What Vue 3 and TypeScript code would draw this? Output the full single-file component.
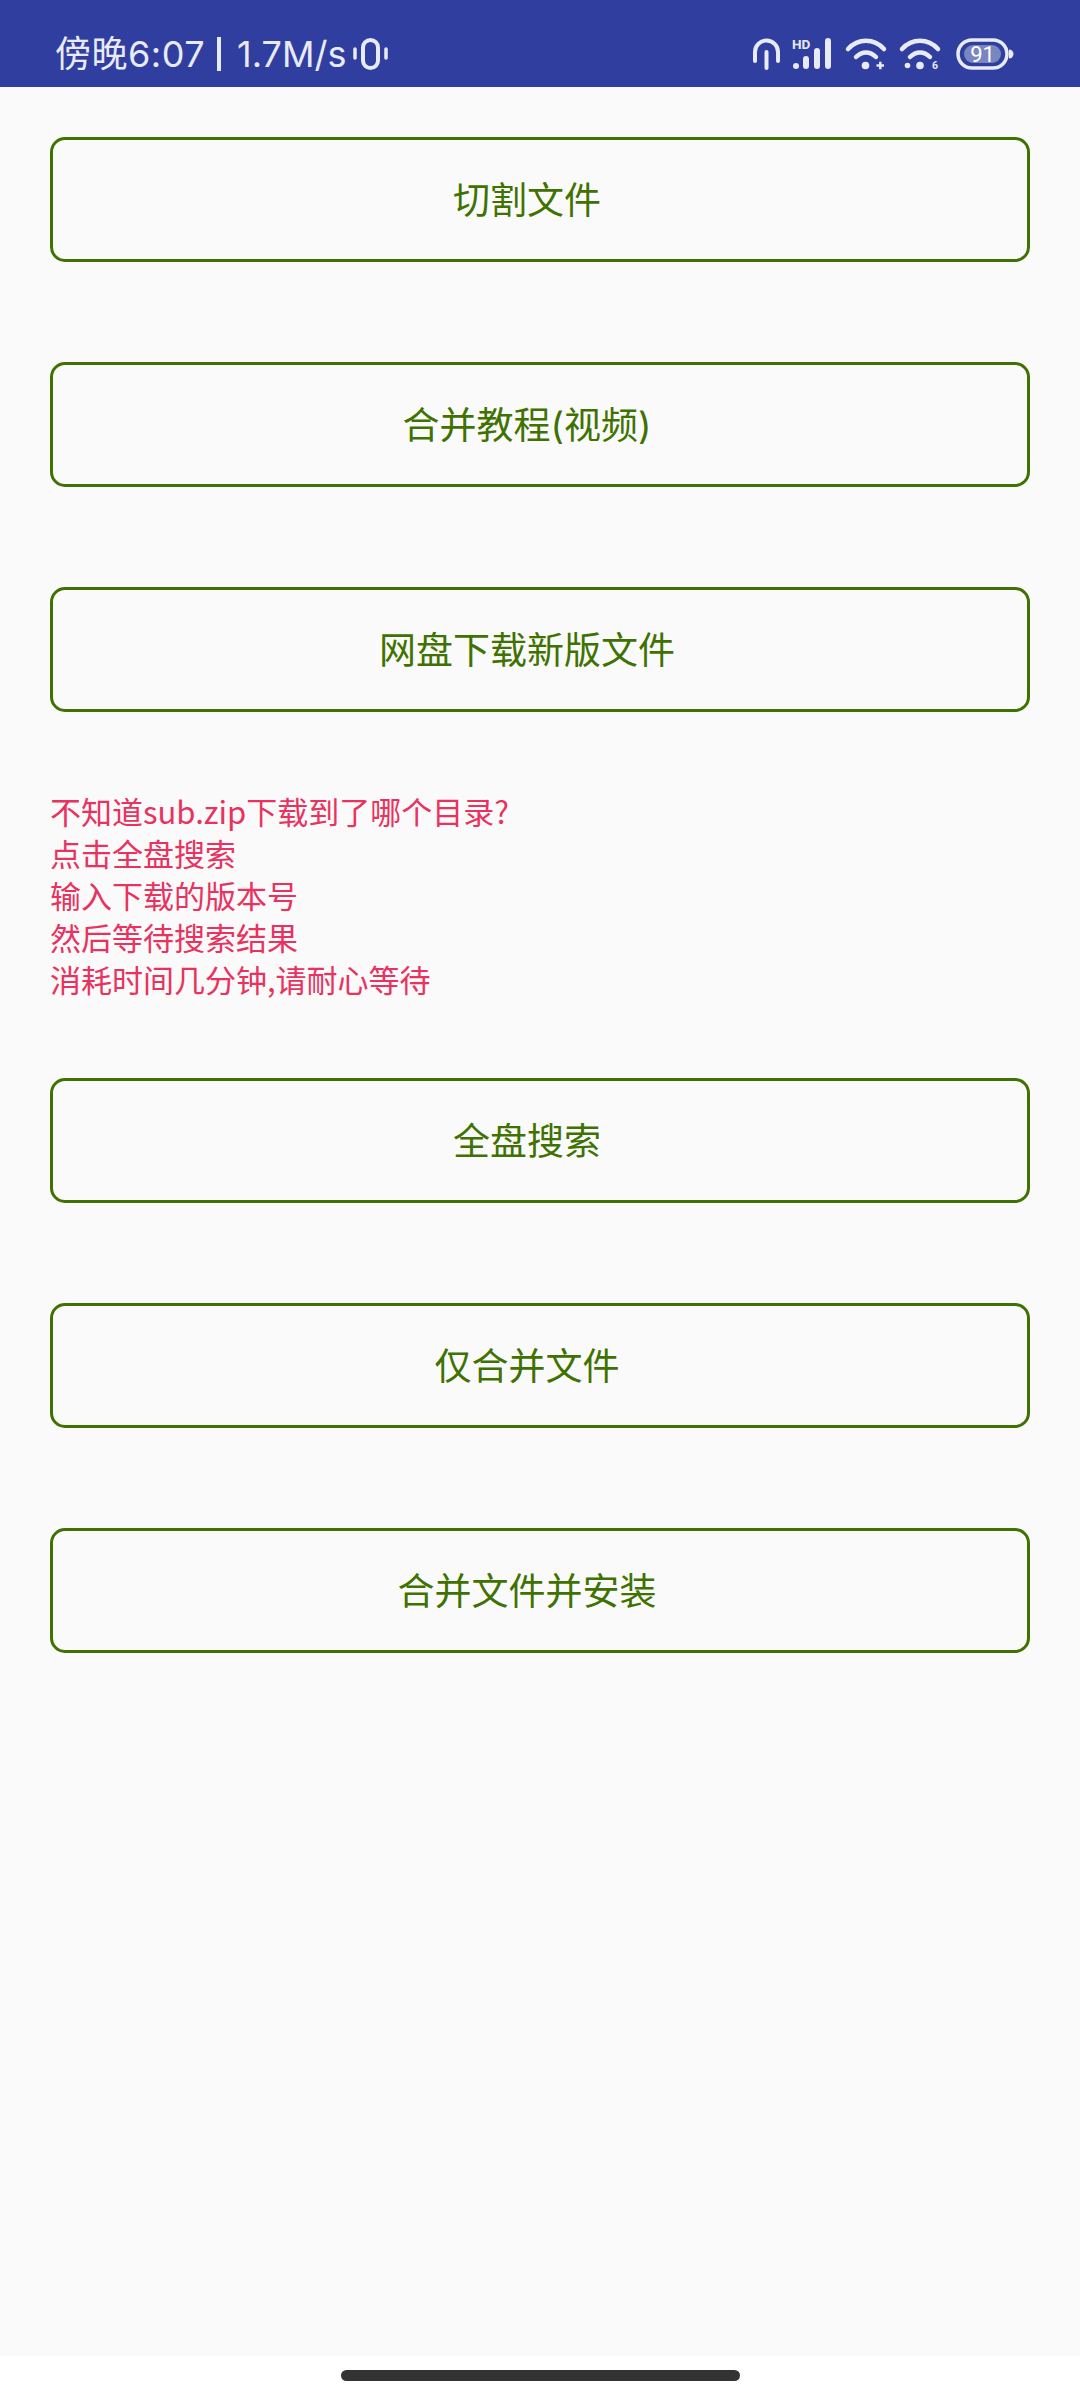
<script setup lang="ts">
const topButtons = ['切割文件', '合并教程(视频)', '网盘下载新版文件']
const bottomButtons = ['全盘搜索', '仅合并文件', '合并文件并安装']
const hints = [
  '不知道sub.zip下载到了哪个目录?',
  '点击全盘搜索',
  '输入下载的版本号',
  '然后等待搜索结果',
  '消耗时间几分钟,请耐心等待',
]
</script>

<template>
  <div class="screen">
    <header class="status-bar">
      <div class="status-left">
        <span class="clock">傍晚6:07</span>
        <span class="sep"></span>
        <span class="speed">1.7M/s</span>
        <svg class="ic-vibrate" width="35" height="32" viewBox="0 0 35 32" fill="none" stroke="#e8eaf6">
          <rect x="10" y="2" width="15" height="28" rx="7.500" stroke-width="4" />
          <path d="M2 11v9M33 11v9" stroke-width="3.500" stroke-linecap="round" />
        </svg>
      </div>
      <div class="status-right">
        <svg class="ic-antenna" width="27" height="32" viewBox="0 0 27 32" fill="none" stroke="#e8eaf6" stroke-width="4" stroke-linecap="round">
          <path d="M2 23V14a11.500 11.500 0 0 1 23 0v9" />
          <path d="M13.500 14v16" />
        </svg>
        <svg class="ic-signal" width="40" height="32" viewBox="0 0 40 32" fill="#e8eaf6">
          <text x="0" y="11" class="hd">HD</text>
          <circle cx="4" cy="28" r="3" />
          <rect x="11" y="18" width="6" height="13" rx="3" />
          <rect x="22" y="10" width="6" height="21" rx="3" />
          <rect x="33" y="0" width="6" height="31" rx="3" />
        </svg>
        <svg class="ic-wifi" width="40" height="32" viewBox="0 0 40 32" fill="#e8eaf6">
          <path d="M2 11C12 0 28 0 38 11" fill="none" stroke="#e8eaf6" stroke-width="4.500" stroke-linecap="round" />
          <path d="M10 19c6-6 14-6 20 0" fill="none" stroke="#e8eaf6" stroke-width="4.500" stroke-linecap="round" />
          <circle cx="19.500" cy="27.500" r="3.800" />
          <path d="M30.500 27.500h7.500M34.300 23.700v7.500" stroke="#e8eaf6" stroke-width="2.500" />
        </svg>
        <svg class="ic-wifi" width="40" height="32" viewBox="0 0 40 32" fill="#e8eaf6">
          <path d="M2 11C12 0 28 0 38 11" fill="none" stroke="#e8eaf6" stroke-width="4.500" stroke-linecap="round" />
          <path d="M10 19c6-6 14-6 20 0" fill="none" stroke="#e8eaf6" stroke-width="4.500" stroke-linecap="round" />
          <circle cx="7.500" cy="27.500" r="2.800" />
          <circle cx="20" cy="27.500" r="3.800" />
          <text x="32" y="31" class="six">6</text>
        </svg>
        <svg class="ic-battery" width="58" height="32" viewBox="0 0 58 32" fill="none">
          <rect x="2" y="2" width="49" height="28" rx="14" stroke="#e8eaf6" stroke-width="3.500" />
          <rect x="8" y="7" width="37" height="18" rx="9" fill="#7986bf" />
          <path d="M53 11.500a4.500 4.500 0 0 1 0 9z" fill="#e8eaf6" />
          <text x="26.500" y="24" text-anchor="middle" class="level">91</text>
        </svg>
      </div>
    </header>

    <main class="content">
      <section class="group">
        <button v-for="label in topButtons" :key="label" class="action-btn">{{ label }}</button>
      </section>

      <p class="hint">
        <span v-for="line in hints" :key="line" class="hint-line">{{ line }}</span>
      </p>

      <section class="group">
        <button v-for="label in bottomButtons" :key="label" class="action-btn">{{ label }}</button>
      </section>
    </main>

    <footer class="nav-bar">
      <span class="home-pill"></span>
    </footer>
  </div>
</template>

<style scoped>
.screen {
  width: 1080px;
  height: 2400px;
  display: flex;
  flex-direction: column;
  background: #fafafa;
  font-family: "Noto Sans CJK SC", "Noto Sans", sans-serif;
  overflow: hidden;
}

.status-bar {
  height: 87px;
  flex-shrink: 0;
  box-sizing: border-box;
  padding: 38px 66px 0 55px;
  display: flex;
  justify-content: space-between;
  align-items: flex-start;
  background: #303f9f;
  color: #e8eaf6;
}

.status-left {
  display: flex;
  align-items: center;
  height: 32px;
}

.clock,
.speed {
  font-family: Inter, "Noto Sans CJK SC", sans-serif;
  font-size: 36px;
  line-height: 32px;
  white-space: nowrap;
}

.clock {
  letter-spacing: 0.5px;
}

.sep {
  width: 4px;
  height: 34px;
  margin: 0 16px 0 12px;
  background: #e8eaf6;
}

.ic-vibrate {
  margin-left: 7px;
}

.status-right {
  display: flex;
  gap: 14px;
}

.status-right svg {
  overflow: visible;
}

.ic-antenna {
  margin-right: -2px;
}

.ic-battery {
  margin-left: 2px;
}

.hd {
  font: 700 13.500px "Roboto", sans-serif;
}

.six {
  font: 700 10.500px "Roboto", sans-serif;
}

.level {
  font: 400 22px "Roboto", sans-serif;
  fill: #fff;
}

.content {
  flex: 1;
  padding: 50px 50px 0;
  box-sizing: border-box;
}

.group {
  display: flex;
  flex-direction: column;
  gap: 100px;
}

.action-btn {
  height: 125px;
  padding: 0 26px 3px 0;
  box-sizing: border-box;
  background: transparent;
  border: 3px solid #3f7200;
  border-radius: 15px;
  color: #3f7200;
  font-family: Inter, "Noto Sans CJK SC", sans-serif;
  font-size: 37px;
  font-weight: 400;
}

.hint {
  margin: 78px 0 78px;
  display: flex;
  flex-direction: column;
  color: #e9325f;
  font-size: 31px;
  font-weight: 400;
  line-height: 42px;
}

.hint-line {
  display: block;
  height: 42px;
}

.nav-bar {
  height: 30px;
  flex-shrink: 0;
  display: flex;
  justify-content: center;
  background: #fff;
  padding-top: 14px;
}

.home-pill {
  width: 399px;
  height: 11px;
  border-radius: 6px;
  background: #333;
}
</style>
